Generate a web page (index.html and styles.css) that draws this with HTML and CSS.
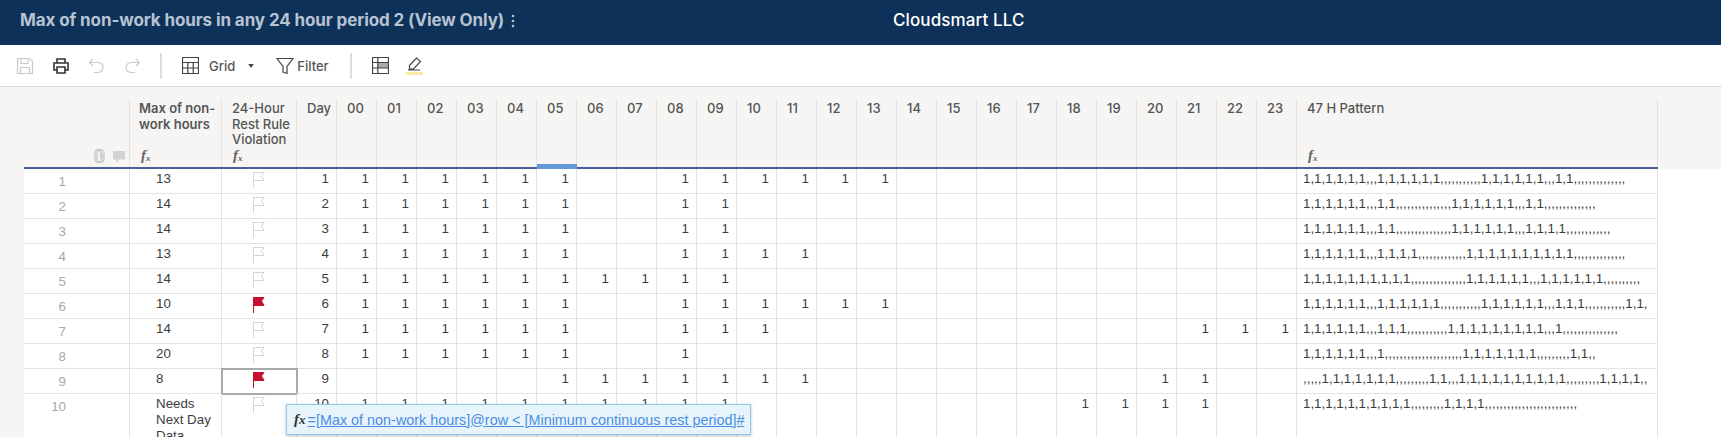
FILE: index.html
```html
<!DOCTYPE html>
<html lang="en">

<head>
    <meta charset="UTF-8">
    <title>Max of non-work hours in any 24 hour period 2</title>
    <link rel="stylesheet" href="styles.css">
</head>

<body>
    <header class="topbar">
        <div class="sheet-title">Max of non-work hours in any 24 hour period 2 (View Only)
            <svg class="kebab" width="4" height="14" viewBox="0 0 4 14"><circle cx="2" cy="2" r="1.3"/><circle cx="2" cy="7" r="1.3"/><circle cx="2" cy="12" r="1.3"/></svg>
        </div>
        <div class="company">Cloudsmart LLC</div>
    </header>

    <div class="toolbar">
        <svg class="tool off" width="18" height="18" viewBox="0 0 18 18"><path d="M1.5 1.5h12l3 3v12h-15z"/><path d="M5 1.5v5h7v-5M4.500 16.500v-6h9v6"/></svg>
        <svg class="tool print" width="18" height="18" viewBox="0 0 18 18"><path d="M5 6V2h8v4M5 13H2V6h14v7h-3"/><path d="M5 10h8v6H5z"/></svg>
        <svg class="tool off undo" width="16" height="16" viewBox="0 0 16 16"><path d="M1.500 4.500H10a5 5 0 0 1 0 10H6M5 1L1.500 4.500 5 8"/></svg>
        <svg class="tool off redo" width="16" height="16" viewBox="0 0 16 16"><path d="M14.500 4.500H6a5 5 0 0 0 0 10h4M11 1l3.500 3.500L11 8"/></svg>
        <span class="sep"></span>
        <svg class="tool" width="17" height="17" viewBox="0 0 17 17"><path d="M.5.5h16v16H.5zM.5 5.500h16M.5 11h16M5.800 5.500v11M11.200 5.500v11"/></svg>
        <span class="tool-label grid-label">Grid</span>
        <svg class="caret" width="6" height="4" viewBox="0 0 7 5"><path d="M0 0h7L3.500 5z"/></svg>
        <svg class="tool funnel" width="18" height="18" viewBox="0 0 18 18"><path d="M1 1.500h16l-6 8v7l-4-1.500V9.500z"/></svg>
        <span class="tool-label">Filter</span>
        <span class="sep sep-two"></span>
        <svg class="tool" width="17" height="17" viewBox="0 0 17 17"><path class="band" d="M6 6h10.500v5H6z"/><path d="M.5.500h16v16H.5zM.5 5.500h16M.5 11h16M5.800 .5v16"/></svg>
        <span class="marker">
            <svg class="tool" width="16" height="14" viewBox="0 0 16 14"><path d="M2.500 8.500L9.500 1l4 3.500-7 7.500H2.500zM1 13h12"/></svg>
        </span>
    </div>

    <main class="sheet">
        <div class="head-band">
            <div class="cols head-row">
                <div class="hc hc-icons">
                    <svg class="clip" width="11" height="14" viewBox="0 0 11 14"><path d="M8 4v6.500a2.500 2.500 0 0 1-5 0V3.500a2 2 0 0 1 4 0V10"/><path d="M10 3.500v7a4.500 3 0 0 1-9 0v-7a4.500 3 0 0 1 9 0"/></svg>
                    <svg class="bubble" width="12" height="12" viewBox="0 0 12 12"><path d="M0 0h12v8.500H6L3 12V8.500H0z"/></svg>
                </div>
                <div class="hc primary">Max of non-work hours<span class="fx">f<sub>x</sub></span></div>
                <div class="hc">24-Hour Rest Rule Violation<span class="fx">f<sub>x</sub></span></div>
                <div class="hc">Day</div>
                <div class="hc">00</div><div class="hc">01</div><div class="hc">02</div><div class="hc">03</div><div class="hc">04</div>
                <div class="hc picked">05</div>
                <div class="hc">06</div><div class="hc">07</div><div class="hc">08</div><div class="hc">09</div><div class="hc">10</div><div class="hc">11</div>
                <div class="hc">12</div><div class="hc">13</div><div class="hc">14</div><div class="hc">15</div><div class="hc">16</div><div class="hc">17</div>
                <div class="hc">18</div><div class="hc">19</div><div class="hc">20</div><div class="hc">21</div><div class="hc">22</div><div class="hc">23</div>
                <div class="hc">47 H Pattern<span class="fx">f<sub>x</sub></span></div>
            </div>
        </div>

        <div class="body-wrap">
            <div class="rows">
                <div class="cols row">
                    <span class="num">1</span><span class="c left">13</span><span class="c flag"><svg width="12" height="16" viewBox="0 0 12 16"><path d="M.5 0v16M.5.500H11L8.500 4 11 8.500H.5"/></svg></span><span class="c n">1</span>
                    <span class="c n">1</span><span class="c n">1</span><span class="c n">1</span><span class="c n">1</span><span class="c n">1</span><span class="c n">1</span><span class="c n"></span><span class="c n"></span><span class="c n">1</span><span class="c n">1</span><span class="c n">1</span><span class="c n">1</span><span class="c n">1</span><span class="c n">1</span><span class="c n"></span><span class="c n"></span><span class="c n"></span><span class="c n"></span><span class="c n"></span><span class="c n"></span><span class="c n"></span><span class="c n"></span><span class="c n"></span><span class="c n"></span>
                    <span class="c pattern"><span>1,1,1,1,1,1,,,1,1,1,1,1,1,,,,,,,,,,,1,1,1,1,1,1,,,1,1,,,,,,,,,,,,,,</span></span>
                </div>
                <div class="cols row">
                    <span class="num">2</span><span class="c left">14</span><span class="c flag"><svg width="12" height="16" viewBox="0 0 12 16"><path d="M.5 0v16M.5.500H11L8.500 4 11 8.500H.5"/></svg></span><span class="c n">2</span>
                    <span class="c n">1</span><span class="c n">1</span><span class="c n">1</span><span class="c n">1</span><span class="c n">1</span><span class="c n">1</span><span class="c n"></span><span class="c n"></span><span class="c n">1</span><span class="c n">1</span><span class="c n"></span><span class="c n"></span><span class="c n"></span><span class="c n"></span><span class="c n"></span><span class="c n"></span><span class="c n"></span><span class="c n"></span><span class="c n"></span><span class="c n"></span><span class="c n"></span><span class="c n"></span><span class="c n"></span><span class="c n"></span>
                    <span class="c pattern"><span>1,1,1,1,1,1,,,1,1,,,,,,,,,,,,,,,1,1,1,1,1,1,,,1,1,,,,,,,,,,,,,,</span></span>
                </div>
                <div class="cols row">
                    <span class="num">3</span><span class="c left">14</span><span class="c flag"><svg width="12" height="16" viewBox="0 0 12 16"><path d="M.5 0v16M.5.500H11L8.500 4 11 8.500H.5"/></svg></span><span class="c n">3</span>
                    <span class="c n">1</span><span class="c n">1</span><span class="c n">1</span><span class="c n">1</span><span class="c n">1</span><span class="c n">1</span><span class="c n"></span><span class="c n"></span><span class="c n">1</span><span class="c n">1</span><span class="c n"></span><span class="c n"></span><span class="c n"></span><span class="c n"></span><span class="c n"></span><span class="c n"></span><span class="c n"></span><span class="c n"></span><span class="c n"></span><span class="c n"></span><span class="c n"></span><span class="c n"></span><span class="c n"></span><span class="c n"></span>
                    <span class="c pattern"><span>1,1,1,1,1,1,,,1,1,,,,,,,,,,,,,,,1,1,1,1,1,1,,,1,1,1,1,,,,,,,,,,,,</span></span>
                </div>
                <div class="cols row">
                    <span class="num">4</span><span class="c left">13</span><span class="c flag"><svg width="12" height="16" viewBox="0 0 12 16"><path d="M.5 0v16M.5.500H11L8.500 4 11 8.500H.5"/></svg></span><span class="c n">4</span>
                    <span class="c n">1</span><span class="c n">1</span><span class="c n">1</span><span class="c n">1</span><span class="c n">1</span><span class="c n">1</span><span class="c n"></span><span class="c n"></span><span class="c n">1</span><span class="c n">1</span><span class="c n">1</span><span class="c n">1</span><span class="c n"></span><span class="c n"></span><span class="c n"></span><span class="c n"></span><span class="c n"></span><span class="c n"></span><span class="c n"></span><span class="c n"></span><span class="c n"></span><span class="c n"></span><span class="c n"></span><span class="c n"></span>
                    <span class="c pattern"><span>1,1,1,1,1,1,,,1,1,1,1,,,,,,,,,,,,,1,1,1,1,1,1,1,1,1,1,,,,,,,,,,,,,,</span></span>
                </div>
                <div class="cols row">
                    <span class="num">5</span><span class="c left">14</span><span class="c flag"><svg width="12" height="16" viewBox="0 0 12 16"><path d="M.5 0v16M.5.500H11L8.500 4 11 8.500H.5"/></svg></span><span class="c n">5</span>
                    <span class="c n">1</span><span class="c n">1</span><span class="c n">1</span><span class="c n">1</span><span class="c n">1</span><span class="c n">1</span><span class="c n">1</span><span class="c n">1</span><span class="c n">1</span><span class="c n">1</span><span class="c n"></span><span class="c n"></span><span class="c n"></span><span class="c n"></span><span class="c n"></span><span class="c n"></span><span class="c n"></span><span class="c n"></span><span class="c n"></span><span class="c n"></span><span class="c n"></span><span class="c n"></span><span class="c n"></span><span class="c n"></span>
                    <span class="c pattern"><span>1,1,1,1,1,1,1,1,1,1,,,,,,,,,,,,,,,1,1,1,1,1,1,,,1,1,1,1,1,1,,,,,,,,,,</span></span>
                </div>
                <div class="cols row">
                    <span class="num">6</span><span class="c left">10</span><span class="c flag red"><svg width="12" height="16" viewBox="0 0 12 16"><path d="M.5 0v16M.5.500H11L8.500 4 11 8.500H.5"/></svg></span><span class="c n">6</span>
                    <span class="c n">1</span><span class="c n">1</span><span class="c n">1</span><span class="c n">1</span><span class="c n">1</span><span class="c n">1</span><span class="c n"></span><span class="c n"></span><span class="c n">1</span><span class="c n">1</span><span class="c n">1</span><span class="c n">1</span><span class="c n">1</span><span class="c n">1</span><span class="c n"></span><span class="c n"></span><span class="c n"></span><span class="c n"></span><span class="c n"></span><span class="c n"></span><span class="c n"></span><span class="c n"></span><span class="c n"></span><span class="c n"></span>
                    <span class="c pattern"><span>1,1,1,1,1,1,,,1,1,1,1,1,1,,,,,,,,,,,1,1,1,1,1,1,,,1,1,1,,,,,,,,,,,1,1,</span></span>
                </div>
                <div class="cols row">
                    <span class="num">7</span><span class="c left">14</span><span class="c flag"><svg width="12" height="16" viewBox="0 0 12 16"><path d="M.5 0v16M.5.500H11L8.500 4 11 8.500H.5"/></svg></span><span class="c n">7</span>
                    <span class="c n">1</span><span class="c n">1</span><span class="c n">1</span><span class="c n">1</span><span class="c n">1</span><span class="c n">1</span><span class="c n"></span><span class="c n"></span><span class="c n">1</span><span class="c n">1</span><span class="c n">1</span><span class="c n"></span><span class="c n"></span><span class="c n"></span><span class="c n"></span><span class="c n"></span><span class="c n"></span><span class="c n"></span><span class="c n"></span><span class="c n"></span><span class="c n"></span><span class="c n">1</span><span class="c n">1</span><span class="c n">1</span>
                    <span class="c pattern"><span>1,1,1,1,1,1,,,1,1,1,,,,,,,,,,,1,1,1,1,1,1,1,1,1,,,1,,,,,,,,,,,,,,,</span></span>
                </div>
                <div class="cols row">
                    <span class="num">8</span><span class="c left">20</span><span class="c flag"><svg width="12" height="16" viewBox="0 0 12 16"><path d="M.5 0v16M.5.500H11L8.500 4 11 8.500H.5"/></svg></span><span class="c n">8</span>
                    <span class="c n">1</span><span class="c n">1</span><span class="c n">1</span><span class="c n">1</span><span class="c n">1</span><span class="c n">1</span><span class="c n"></span><span class="c n"></span><span class="c n">1</span><span class="c n"></span><span class="c n"></span><span class="c n"></span><span class="c n"></span><span class="c n"></span><span class="c n"></span><span class="c n"></span><span class="c n"></span><span class="c n"></span><span class="c n"></span><span class="c n"></span><span class="c n"></span><span class="c n"></span><span class="c n"></span><span class="c n"></span>
                    <span class="c pattern"><span>1,1,1,1,1,1,,,1,,,,,,,,,,,,,,,,,,,,,1,1,1,1,1,1,1,,,,,,,,,1,1,,</span></span>
                </div>
                <div class="cols row">
                    <span class="num">9</span><span class="c left">8</span><span class="c flag red selected"><svg width="12" height="16" viewBox="0 0 12 16"><path d="M.5 0v16M.5.500H11L8.500 4 11 8.500H.5"/></svg></span><span class="c n">9</span>
                    <span class="c n"></span><span class="c n"></span><span class="c n"></span><span class="c n"></span><span class="c n"></span><span class="c n">1</span><span class="c n">1</span><span class="c n">1</span><span class="c n">1</span><span class="c n">1</span><span class="c n">1</span><span class="c n">1</span><span class="c n"></span><span class="c n"></span><span class="c n"></span><span class="c n"></span><span class="c n"></span><span class="c n"></span><span class="c n"></span><span class="c n"></span><span class="c n">1</span><span class="c n">1</span><span class="c n"></span><span class="c n"></span>
                    <span class="c pattern"><span>,,,,,1,1,1,1,1,1,1,,,,,,,,,1,1,,,1,1,1,1,1,1,1,1,1,1,,,,,,,,,1,1,1,1,,</span></span>
                </div>
                <div class="cols row row-tall">
                    <span class="num">10</span><span class="c left">Needs Next Day Data</span><span class="c flag"><svg width="12" height="16" viewBox="0 0 12 16"><path d="M.5 0v16M.5.500H11L8.500 4 11 8.500H.5"/></svg></span><span class="c n">10</span>
                    <span class="c n">1</span><span class="c n">1</span><span class="c n">1</span><span class="c n">1</span><span class="c n">1</span><span class="c n">1</span><span class="c n">1</span><span class="c n">1</span><span class="c n">1</span><span class="c n">1</span><span class="c n"></span><span class="c n"></span><span class="c n"></span><span class="c n"></span><span class="c n"></span><span class="c n"></span><span class="c n"></span><span class="c n"></span><span class="c n">1</span><span class="c n">1</span><span class="c n">1</span><span class="c n">1</span><span class="c n"></span><span class="c n"></span>
                    <span class="c pattern"><span>1,1,1,1,1,1,1,1,1,1,,,,,,,,,1,1,1,1,,,,,,,,,,,,,,,,,,,,,,,,,</span></span>
                </div>
            </div>
        </div>

        <div class="formula-tip">
            <span class="tip-fx">f<sub>x</sub></span>
            <a class="tip-text" href="#">=[Max of non-work hours]@row &lt; [Minimum continuous rest period]#</a>
        </div>
    </main>
</body>

</html>
```

FILE: styles.css
```css
* {
    box-sizing: border-box;
}

html,
body {
    margin: 0;
    height: 100%;
    overflow: hidden;
    background-color: #fff;
}

body {
    font-family: "Inter", "Liberation Sans", sans-serif;
}

.topbar {
    display: grid;
    grid-template-columns: 893px auto;
    height: 45px;
    padding-top: 10px;
    background-color: #0e3159;
}

.sheet-title {
    display: flex;
    align-items: flex-start;
    gap: 7px;
    padding-left: 20px;
    font-size: 17px;
    line-height: 21px;
    font-weight: 700;
    letter-spacing: -0.1px;
    color: #b7c3d1;
    white-space: nowrap;
}

.kebab {
    margin-top: 4px;
    fill: #b7c3d1;
}

.company {
    font-size: 17px;
    line-height: 21px;
    font-weight: 500;
    letter-spacing: 0.1px;
    color: #fff;
}

.toolbar {
    display: flex;
    align-items: center;
    height: 42px;
    padding-left: 16px;
    border-bottom: 1px solid #d9d7d3;
}

.tool {
    flex: none;
    fill: none;
    stroke: #444;
    stroke-width: 1.2;
}

.tool.off {
    stroke: #c9c9c9;
}

.print {
    margin-left: 18px;
    stroke: #333;
    stroke-width: 1.6;
}

.undo {
    margin-left: 18px;
}

.redo {
    margin-left: 21px;
}

.sep {
    width: 2px;
    height: 26px;
    margin: 0 20px 0 19px;
    background-color: #dedede;
}

.sep-two {
    margin: 0 20px 0 21px;
}

.tool-label {
    font-size: 13px;
    font-weight: 500;
    color: #555;
}

.grid-label {
    margin-left: 10px;
}

.caret {
    margin-left: 13px;
    fill: #444;
}

.funnel {
    margin: 0 3px 0 22px;
}

.band {
    fill: #aaa;
    stroke: none;
}

.marker {
    display: flex;
    margin-left: 17px;
    padding: 0 0 1px 1px;
    border-bottom: 3px solid #fbe9a3;
}

.sheet {
    position: relative;
}

.cols {
    display: grid;
    grid-template-columns: 106px 92px 75px repeat(25, 40px) 361px;
    width: 1634px;
}

.head-band {
    height: 82px;
    padding: 12px 0 0 24px;
    background-color: #f6f5f3;
}

.head-row {
    height: 70px;
    border-bottom: 2px solid #4a609c;
}

.hc {
    position: relative;
    display: flex;
    flex-direction: column;
    padding: 2px 0 0 10px;
    border-right: 1px solid #e4e3e0;
    font-size: 13px;
    line-height: 15.500px;
    font-weight: 500;
    color: #555;
}

.hc-icons {
    flex-direction: row;
    justify-content: flex-end;
    align-items: flex-end;
    gap: 8px;
    padding: 0 4px 4px 0;
}

.primary {
    padding-left: 9px;
    font-weight: 600;
}

.picked::after {
    content: "";
    position: absolute;
    left: 0;
    right: -1px;
    bottom: -2px;
    height: 5px;
    background-color: #6497d6;
}

.clip {
    fill: none;
    stroke: #c6c6c6;
    stroke-width: 1.3;
}

.bubble {
    fill: #d2d2d2;
}

.fx {
    position: absolute;
    left: 11px;
    bottom: 1px;
    font-family: "Liberation Serif", serif;
    font-style: italic;
    font-weight: 700;
    font-size: 15px;
    line-height: 15px;
    color: #666;
}

.fx sub {
    font-size: 9px;
    vertical-align: -1px;
}

.body-wrap {
    border-left: 24px solid #f6f5f3;
    min-height: 268px;
}

.row {
    height: 25px;
    font-family: "Liberation Sans", sans-serif;
    font-size: 13.330px;
    line-height: 16px;
    color: #3c3c3c;
}

.row-tall {
    height: 60px;
}

.num {
    padding: 5px 63px 0 0;
    border-right: 1px solid #e3e3e3;
    border-bottom: 1px solid #e3e3e3;
    text-align: right;
    color: #a8a8a8;
}

.c {
    display: block;
    padding-top: 2px;
    border-right: 1px solid #e3e3e3;
    border-bottom: 1px solid #e3e3e3;
}

.left {
    padding-left: 26px;
    padding-right: 10px;
}

.n {
    padding-right: 7px;
    text-align: right;
}

.flag {
    padding-top: 3px;
    text-align: center;
}

.flag svg {
    display: inline-block;
    fill: none;
    stroke: #d6d6d6;
}

.flag.red svg {
    fill: #c8102e;
    stroke: #c8102e;
}

.selected {
    outline: 2px solid #a9a9a9;
    outline-offset: -1px;
}

.pattern {
    padding: 2px 7px 0 6px;
}

.pattern span {
    display: block;
    overflow: hidden;
    white-space: nowrap;
}

.formula-tip {
    position: absolute;
    left: 286px;
    top: 317px;
    display: flex;
    align-items: center;
    gap: 2px;
    width: 465px;
    height: 31px;
    padding-left: 7px;
    background-color: #e8f4fc;
    border: 1px solid #92c8ef;
    box-shadow: 0 1px 3px rgba(0, 0, 0, 0.25);
}

.tip-fx {
    font-family: "Liberation Serif", serif;
    font-style: italic;
    font-weight: 700;
    font-size: 15px;
    color: #333;
}

.tip-fx sub {
    font-size: 13px;
    vertical-align: baseline;
}

.tip-text {
    font-family: "Liberation Sans", sans-serif;
    font-size: 14.400px;
    color: #4a8fe0;
    white-space: nowrap;
}
```
